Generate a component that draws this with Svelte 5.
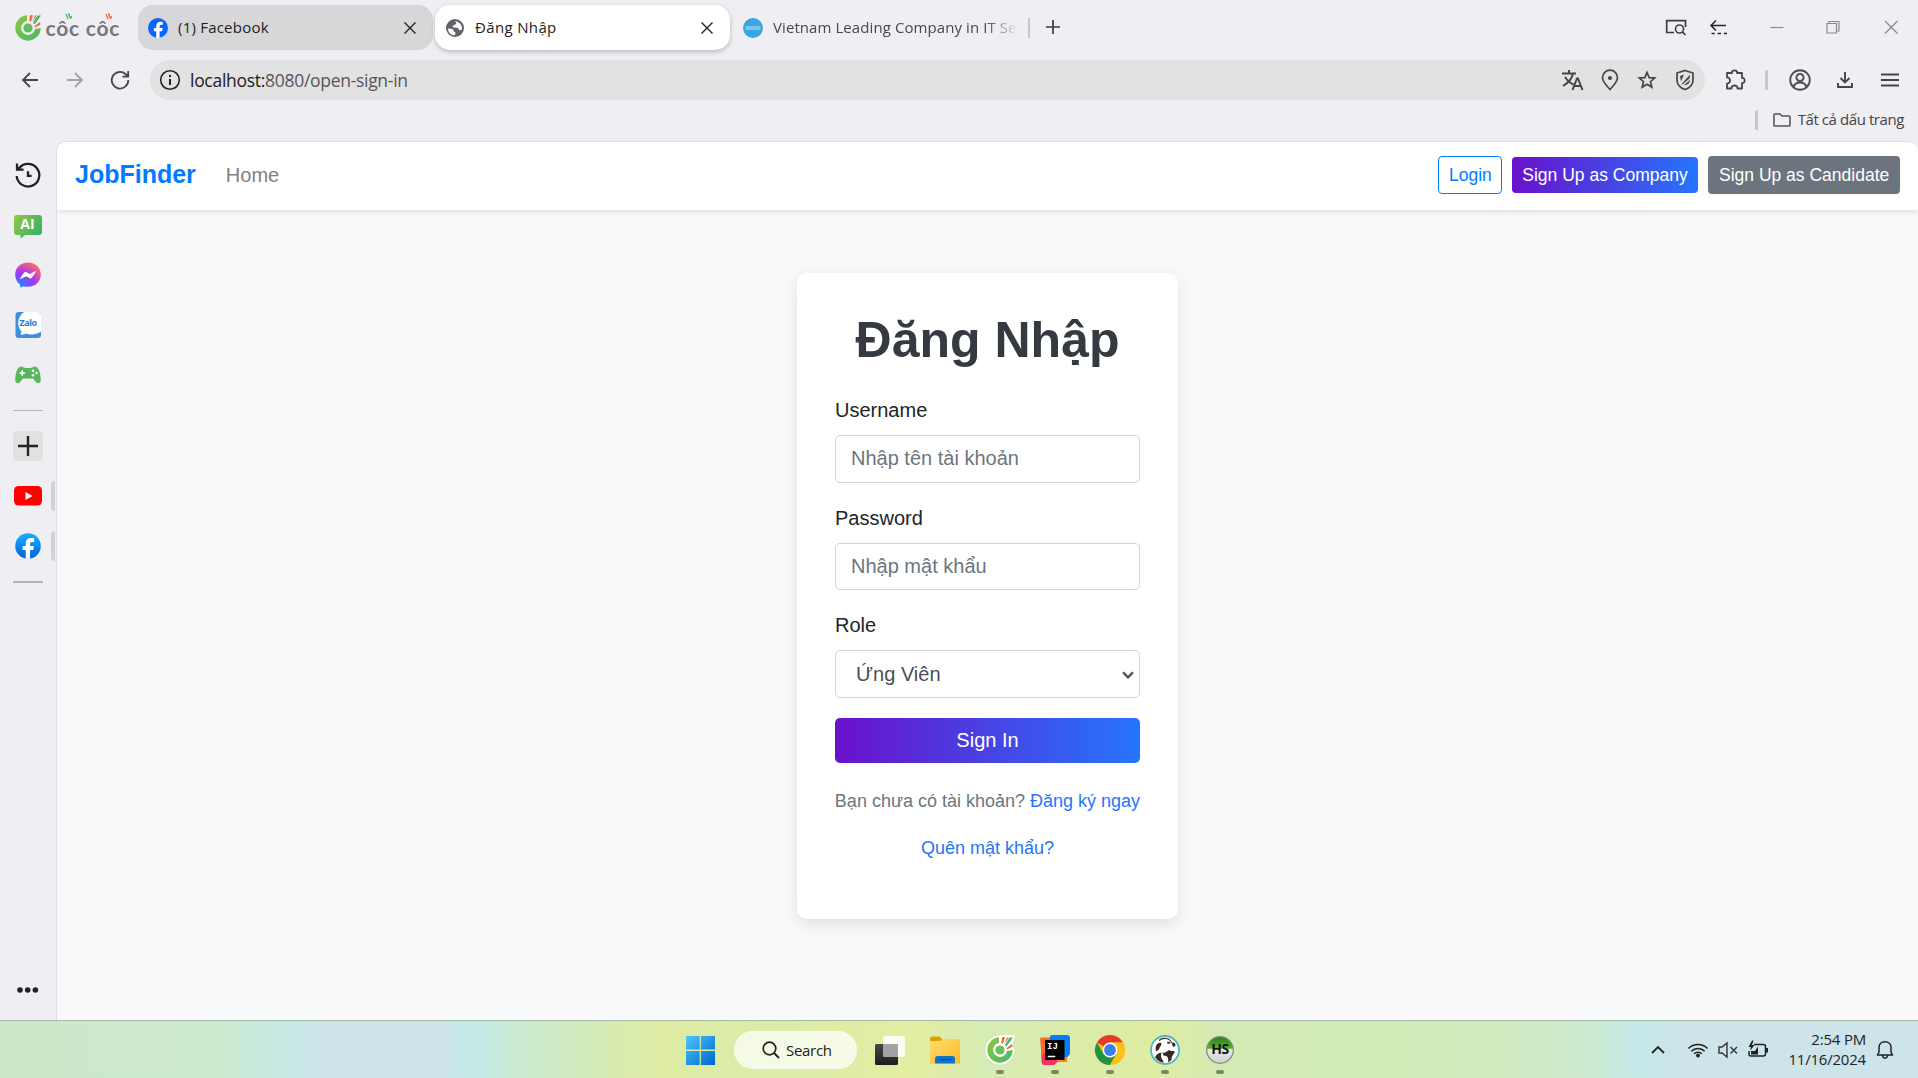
<script>
  let username = $state('');
  let password = $state('');
  const running = ['coccoc', 'idea', 'chrome', 'dbeaver', 'hs'];
</script>

{#snippet fb(id)}
  <svg class="ic" viewBox="-15 -15 30 30">
    <defs>
      <linearGradient id="fbg" x1="0" y1="0" x2="0" y2="1"><stop offset="0" stop-color="#19aeff" /><stop offset="1" stop-color="#0062e0" /></linearGradient>
    </defs>
    <g transform={id === 'side' ? 'scale(1.28)' : ''}>
      <circle r="10" fill={id === 'side' ? 'url(#fbg)' : '#0866ff'} />
      <path d="M-1.800 10V3.200H-4.200V0H-1.800V-1.700C-1.800-4.900 0-6.300 2.600-6.300 3.700-6.300 4.600-6.100 4.800-6V-3.200H3.200C2-3.200 1.600-2.500 1.600-1.500V0H4.600L4.100 3.200H1.600V10Z" fill="#fff" />
    </g>
  </svg>
{/snippet}

{#snippet swirl(outline)}
  <svg class="ic" viewBox="-15 -15 30 30">
    <defs>
      <linearGradient id="ccg" x1="0" y1="0" x2="1" y2="1"><stop offset="0" stop-color="#8cc63f" /><stop offset="1" stop-color="#4bb96a" /></linearGradient>
    </defs>
    {#if outline}<path d="M0-14.500A14.500 14.500 0 1 0 14.500 0L12.500-5 15-15H3Z" fill="#fff" />{/if}
    <path d="M-1-12.700A12.700 12.700 0 1 0 12.700 0L7 1A7 7 0 1 1-1-7Z" fill="url(#ccg)" />
    <circle r="4.600" fill={outline ? '#6cbf55' : '#62bd58'} />
    <path d="M5-5 9.500-12.500H13L6.500-3.500Z" fill="#45b86a" />
    <path d="M1.200-7 2-12.700H5L3-6.600Z M6.500-1.800 12-6 12.500-3.400 7-.4Z M4.200-5.500 7-12.500H8.800Z" fill="#f4623a" />
  </svg>
{/snippet}

{#snippet closeX()}
  <svg class="ic" viewBox="-15 -15 30 30"><path d="M-5.500-5.500 5.500 5.500M5.500-5.500-5.500 5.500" stroke="#222" stroke-width="1.400" fill="none" /></svg>
{/snippet}

<div class="screen">
  <header class="chrome">
    <div class="tabs">
      <div class="logo">
        {@render swirl(false)}
        <span class="brandword">côc côc
          <svg class="accents" viewBox="0 0 74 10"><path d="M20 1 22 6M22.500 0 24 5M25.500 3 24.500 6" stroke="#4bb96a" stroke-width="1.300" /><path d="M60 1 62 6M62.500 0 64 5M65.500 3 64.500 6" stroke="#f4623a" stroke-width="1.300" /></svg>
        </span>
      </div>
      <div class="tab idle">
        {@render fb('tab')}
        <span class="t1">(1) Facebook</span>
        {@render closeX()}
      </div>
      <div class="tab active">
        <svg class="ic" viewBox="-15 -15 30 30">
          <circle r="9" fill="#5f6368" />
          <path d="M-7 .5-2.500 1-1 3.500.5 4.500 0 7.300C-4 7.300-7 4.500-7 .5ZM-1-7C2-6 1.500-5 .5-3.500L-2-2.500-2.500-.8-.5-.5 3 0 4.500 2.500 7 1.500C7.500-3 4-7-1-7Z" fill="#fff" />
        </svg>
        <span class="t2">Đăng Nhập</span>
        {@render closeX()}
      </div>
      <div class="tab plain">
        <svg class="ic" viewBox="-15 -15 30 30"><circle r="10" fill="#3aa6e0" /><path d="M-7.500-1H7.500M-7.500 1H7.500" stroke="#b9e0f5" stroke-width="1.200" /></svg>
        <span class="t3">Vietnam Leading Company in IT Se</span>
      </div>
      <i class="tabsep"></i>
      <svg class="ic newtab" viewBox="-15 -15 30 30"><path d="M-7 0H7M0-7V7" stroke="#3c3c40" stroke-width="1.700" /></svg>
      <div class="winctl">
        <svg class="ic" viewBox="-15 -15 30 30"><path d="M-2 5.500H-9.300V-6.300H9.500V0M6.300 4.800 9.500 8" stroke="#3c3c40" stroke-width="1.700" fill="none" /><circle cx="3.500" cy="2" r="4" stroke="#3c3c40" stroke-width="1.600" fill="none" /></svg>
        <svg class="ic back2" viewBox="-15 -15 30 30"><path d="M8-1.500H-7M-2-6.500-7-1.500-2 3.500" stroke="#222" stroke-width="1.500" fill="none" /><path d="M-6.500 6.500H9" stroke="#222" stroke-width="1.600" stroke-dasharray="3.200 3" /></svg>
        <svg class="ic min" viewBox="-15 -15 30 30"><path d="M-6.500 .5H6.500" stroke="#8a8a8e" stroke-width="1.200" /></svg>
        <svg class="ic max" viewBox="-15 -15 30 30"><path d="M-6-3.500H3.500V6H-6ZM-4-3.500V-5.500H6V4H3.500" stroke="#8a8a8e" stroke-width="1.200" fill="none" /></svg>
        <svg class="ic cls" viewBox="-15 -15 30 30"><path d="M-6-6 6.500 6.500M6.500-6-6 6.500" stroke="#8a8a8e" stroke-width="1.200" /></svg>
      </div>
    </div>

    <div class="toolbar">
      <svg class="ic" viewBox="-15 -15 30 30"><path d="M8 0H-7M0-7-7 0 0 7" stroke="#46464a" stroke-width="1.800" fill="none" /></svg>
      <svg class="ic" viewBox="-15 -15 30 30"><path d="M-8 0H7M0-7 7 0 0 7" stroke="#a3a3a8" stroke-width="1.800" fill="none" /></svg>
      <svg class="ic" viewBox="-15 -15 30 30"><path d="M8.300 0A8.300 8.300 0 1 1 5.500-6L8-3.500M8.200-9V-3.300H2.500" stroke="#46464a" stroke-width="1.800" fill="none" /></svg>
      <div class="omnibox">
        <svg class="ic" viewBox="-15 -15 30 30"><circle r="9.300" stroke="#222" stroke-width="1.600" fill="none" /><path d="M0-1V5M0-5V-3" stroke="#222" stroke-width="2" /></svg>
        <span class="url"><b>localhost:</b>8080/open-sign-in</span>
        <div class="omni-actions">
          <svg class="ic" viewBox="-15 -15 30 30"><path d="M-10-6.500H4M-3-10V-6.500M1-6.500C0-1-4 3-9 6M-7-3C-5 0-2 3 1.500 4.500" stroke="#46464a" stroke-width="2" fill="none" /><path d="M.5 10 5-1.500H6L10.500 10M2 6H9" stroke="#46464a" stroke-width="2" fill="none" /></svg>
          <svg class="ic" viewBox="-15 -15 30 30"><path d="M0 9.500C-4 5-7.500 1.500-7.500-2.300A7.500 7.500 0 0 1 7.500-2.300C7.500 1.500 4 5 0 9.500Z" stroke="#46464a" stroke-width="1.700" fill="none" /><circle cy="-2" r="2" fill="#46464a" /></svg>
          <svg class="ic" viewBox="-15 -15 30 30"><path d="M0-7.500 2.200-2.400 7.700-2 3.500 1.700 4.800 7.100 0 4.200-4.800 7.100-3.500 1.700-7.700-2-2.200-2.400Z" stroke="#46464a" stroke-width="1.700" fill="none" /></svg>
          <svg class="ic" viewBox="-15 -15 30 30"><path d="M0-9.500 8-7V0C8 5 4.500 8 0 9.500-4.500 8-8 5-8 0V-7Z" stroke="#46464a" stroke-width="1.700" fill="none" /><path d="M-5-4-1-5.500-4 1.500ZM-4 4.500 5.200-5.500 4.500-1.500-2 4ZM-1.500 5.500 5.500-.5 3.500 4Z" fill="#46464a" /></svg>
        </div>
      </div>
      <svg class="ic" viewBox="-15 -15 30 30"><path d="M-8-7H-3C-4-10.500 3-10.500 2-7H7V-2C10.500-3 10.500 4 7 3V8.500H2.500C3 4.500-4 4.500-3.500 8.500H-8V3.500C-4 4-4-3-8-2.500Z" stroke="#46464a" stroke-width="1.800" fill="none" stroke-linejoin="round" /></svg>
      <i class="vbar"></i>
      <svg class="ic prof" viewBox="-15 -15 30 30"><circle r="9.800" stroke="#4c4c54" stroke-width="1.900" fill="none" /><circle cy="-2.500" r="3.600" stroke="#4c4c54" stroke-width="1.900" fill="none" /><path d="M-6.500 7.300C-5.500 3-3 2.500 0 2.500S5.500 3 6.500 7.300" stroke="#4c4c54" stroke-width="1.900" fill="none" /></svg>
      <svg class="ic" viewBox="-15 -15 30 30"><path d="M0-8V2.500M-4.500-2 0 2.500 4.500-2M-7 3V7H7V3" stroke="#46464a" stroke-width="1.900" fill="none" /></svg>
      <svg class="ic" viewBox="-15 -15 30 30"><path d="M-9-5.500H9M-9 0H9M-9 5.500H9" stroke="#46464a" stroke-width="1.900" /></svg>
    </div>

    <div class="bookmarks">
      <i class="vbar"></i>
      <svg class="folder" viewBox="0 0 18 14"><path d="M1 2.500V12.200Q1 13 1.800 13H16.200Q17 13 17 12.200V3.800Q17 3 16.200 3H9L7 1H1.800Q1 1 1 1.800Z" stroke="#55555a" stroke-width="1.600" fill="none" /></svg>
      <span>Tất cả dấu trang</span>
    </div>
  </header>

  <div class="middle">
    <aside>
      <svg class="ic s-hist" viewBox="-15 -15 30 30"><path d="M-11.300 1A11.300 11.300 0 1 0-8.500-7.300L-11-5M-11-11.500V-5.300H-4.500M0-3.800V.8H3.600" stroke="#222" stroke-width="2.300" fill="none" /></svg>
      <div class="ai"><svg viewBox="-15 -15 30 30"><defs><linearGradient id="aig" x1="0" y1="0" x2="1" y2=".5"><stop offset="0" stop-color="#93c83d" /><stop offset="1" stop-color="#3fb168" /></linearGradient></defs><path d="M-11-12H11Q14-12 14-9V5Q14 8 11 8H-3L-7 11.500-8 8H-11Q-14 8-14 5V-9Q-14-12-11-12Z" fill="url(#aig)" /></svg><b>AI</b></div>
      <svg class="ic s-mess" viewBox="-15 -15 30 30"><defs><radialGradient id="msg" cx=".15" cy="1" r="1.100"><stop offset="0" stop-color="#0695ff" /><stop offset=".55" stop-color="#a334fa" /><stop offset="1" stop-color="#ff6968" /></radialGradient></defs><path d="M0-12.600C7.500-12.600 12.800-7.500 12.800-.4S7.500 11.800 0 11.800C-2 11.800-3.500 11.500-4.500 11.200L-7.800 12.600-8 9.500C-11 7.500-12.800 4-12.800-.4-12.800-7.500-7.500-12.600 0-12.600Z" fill="url(#msg)" /><path d="M-7.500 3.500-3-3 2-.5 7.500-3.500 3 3.200-2 .8Z" fill="#fff" stroke="#fff" stroke-linejoin="round" /></svg>
      <div class="zalo"><svg viewBox="-15 -15 30 30"><rect x="-12.500" y="-13" width="25.500" height="26" rx="3" fill="#3f8fd9" /><path d="M-4-13C-11-8-11.500 1-6.500 6.500L-7.500 9.500C-5 10-3 9-2 8.500 3 10.500 9 9.500 13 6.500V-10Q13-13 10-13Z" fill="#fff" /></svg><b>Zalo</b></div>
      <svg class="ic s-game" viewBox="-15 -15 30 30"><path d="M-7-8.500C-5-8.500-4-7-2.500-7H2.500C4-7 5-8.500 7-8.500 11-8.500 13 0 12.700 5.500 12.500 9 9 9 7.500 6.500L5 3.500H-5L-7.500 6.500C-9 9-12.500 9-12.700 5.500-13 0-11-8.500-7-8.500Z" fill="#5bb55c" /><path d="M-8.500-2H-3M-5.700-4.700V.7" stroke="#fff" stroke-width="1.700" /><g fill="#fff"><circle cx="5" cy="-4.300" r="1.300" /><circle cx="5" cy=".2" r="1.300" /><circle cx="8.500" cy="-2" r="1.300" /></g></svg>
      <i class="hr h1"></i>
      <div class="plus"><svg viewBox="-15 -15 30 30"><path d="M-10 0H10M0-10V10" stroke="#222" stroke-width="2.400" /></svg></div>
      <div class="open-app yt"><svg class="ic" viewBox="-15 -15 30 30"><rect x="-14" y="-10" width="28" height="19.500" rx="4.500" fill="#f00" /><path d="M-2.500-4 4.500 0-2.500 4Z" fill="#fff" /></svg><i></i></div>
      <div class="open-app">{@render fb('side')}<i></i></div>
      <i class="hr h2"></i>
      <svg class="ic s-more" viewBox="-15 -15 30 30"><g fill="#222"><circle cx="-8" r="2.800" /><circle cx="-.3" r="2.800" /><circle cx="7.400" r="2.800" /></g></svg>
    </aside>

    <main>
      <nav>
        <a class="brand" href="#home">JobFinder</a>
        <a class="home" href="#home">Home</a>
        <div class="nav-actions">
          <button class="sm login">Login</button>
          <button class="sm company">Sign Up as Company</button>
          <button class="sm candidate">Sign Up as Candidate</button>
        </div>
      </nav>
      <form class="card" onsubmit={(e) => e.preventDefault()}>
        <h1>Đăng Nhập</h1>
        <label for="user">Username</label>
        <input id="user" type="text" placeholder="Nhập tên tài khoản" bind:value={username} />
        <label for="pass">Password</label>
        <input id="pass" type="password" placeholder="Nhập mật khẩu" bind:value={password} />
        <label for="role">Role</label>
        <div class="select" id="role"><span>Ứng Viên</span><svg viewBox="0 0 12 8"><path d="M1 1.300 6 6.300 11 1.300" stroke="#495057" stroke-width="2.300" fill="none" /></svg></div>
        <button class="submit">Sign In</button>
        <p>Bạn chưa có tài khoản? <a href="#signup">Đăng ký ngay</a></p>
        <p class="forgot"><a href="#forgot">Quên mật khẩu?</a></p>
      </form>
    </main>
  </div>

  <footer>
    <div class="dock">
      <svg class="ic" viewBox="-15 -15 30 30"><defs><linearGradient id="wing" gradientUnits="userSpaceOnUse" x1="-14" y1="-14" x2="14" y2="14"><stop offset="0" stop-color="#4cc9fb" /><stop offset="1" stop-color="#0067cf" /></linearGradient></defs><path d="M-14-14H-.3V-.5H-14ZM.9-14H15V-.5H.9ZM-14 1H-.3V15H-14ZM.9 1H15V15H.9Z" fill="url(#wing)" /></svg>
      <div class="search"><svg viewBox="0 0 18 18"><circle cx="7.500" cy="7.500" r="6.300" stroke="#222" stroke-width="1.700" fill="none" /><path d="M12 12 17 17" stroke="#222" stroke-width="1.900" /></svg><span>Search</span></div>
      <svg class="ic" viewBox="-15 -15 30 30"><defs><linearGradient id="tv" x1="0" y1="0" x2="0" y2="1"><stop offset="0" stop-color="#484848" /><stop offset="1" stop-color="#1c1c1c" /></linearGradient></defs><rect x="-15" y="-6" width="23" height="21" rx="1.500" fill="url(#tv)" /><rect x="-7" y="-14" width="22" height="21" rx="1.500" fill="#fff" opacity=".86" /><path d="M-7-6H8V7H-7Z" fill="#8e8e8e" opacity=".75" /></svg>
      <svg class="ic" viewBox="-15 -15 30 30"><defs><linearGradient id="fold" x1="0" y1="0" x2="1" y2="1"><stop offset="0" stop-color="#ffdc6b" /><stop offset="1" stop-color="#fbbb2b" /></linearGradient></defs><path d="M-15-12Q-15-13.500-13-13.500H-6L-3-11.500V-6H-15Z" fill="#dea000" /><path d="M-15-9H-5L-2-11H13Q15-11 15-9V13.500H-15Z" fill="url(#fold)" /><path d="M-10 13.500V8.500Q-10 6-7.500 6H7.500Q10 6 10 8.500V13.500Z" fill="#0f75cf" /><path d="M-6.500 9.500H6.500" stroke="#08508f" stroke-width="1.500" /></svg>
      {#each running as app}
        <div class="app">
          {#if app === 'coccoc'}
            {@render swirl(true)}
          {:else if app === 'idea'}
            <svg class="ic" viewBox="-15 -15 30 30"><path d="M-14-7-6 8 5 10-1 15H-11Q-13 15-13.500 12Z" fill="#fc3162" /><path d="M-15-11Q-15-12.500-13.500-12.500H-3V-3L-13.500 5Z" fill="#fc6a2d" /><path d="M-5-13Q-5-15-3-15H13L15-13V4L9 11-5 0Z" fill="#087cfa" /><path d="M2 7H12V12H2Z" fill="#fc801d" /><rect x="-10" y="-10" width="19.500" height="20" fill="#000" /><path d="M-7.300 6.500H.3" stroke="#fff" stroke-width="1.500" /></svg><b class="ij">IJ</b>
          {:else if app === 'chrome'}
            <svg class="ic" viewBox="-15 -15 30 30"><circle r="15" fill="#fbc116" /><path d="M0 0-13-7.500A15 15 0 0 1 13-7.500H0Z" fill="#e33b2e" /><path d="M-13-7.500A15 15 0 0 0 0 15L6.500 3.700-6.500 3.700Z" fill="#229342" /><path d="M0-7.500H13A15 15 0 0 1 0 15L6.500 3.700Z" fill="#fbc116" /><circle r="7.400" fill="#fff" /><circle r="5.900" fill="#3b7ded" /></svg>
          {:else if app === 'dbeaver'}
            <svg class="ic" viewBox="-15 -15 30 30"><circle r="14" fill="#fff" stroke="#4db5c5" stroke-width="1.800" /><path d="M-6-9.500C-2-13 5-12 6.500-7" stroke="#3b2823" stroke-width="1.100" fill="none" /><path d="M-6-7C-3-8-3-5-5-3-6-1-6.500 1-9 1-10-3-9-6-6-7ZM2.500-8.500 5-8 4.500-6 2-6.500ZM6.500-7.500 10-7 10.500-4 8-3ZM-3 2C-1 4 1 2 4 0 6 2 9 0 10 2 8 5 6 7 6.500 10L3 12.500C4 8 2 5-1 6ZM-10 7C-7 3-4 2-3.500 3.500-5 7-3 9-1 12.500-5 12.500-8 10.500-10 7Z" fill="#3b2823" /></svg>
          {:else}
            <svg class="ic" viewBox="-15 -15 30 30"><defs><linearGradient id="hsg" x1="0" y1="0" x2="0" y2="1"><stop offset="0" stop-color="#2f7a1c" /><stop offset=".44" stop-color="#55b82a" /><stop offset=".46" stop-color="#e9ebe8" /><stop offset="1" stop-color="#cfd1ce" /></linearGradient></defs><circle r="13.300" fill="url(#hsg)" stroke="#858b82" stroke-width="1.300" /></svg><b class="hs">HS</b>
          {/if}
          <i></i>
        </div>
      {/each}
    </div>
    <div class="tray">
      <svg class="ic" viewBox="-15 -15 30 30"><path d="M-6 3 0-3 6 3" stroke="#222" stroke-width="1.800" fill="none" /></svg>
      <svg class="ic wifi" viewBox="-15 -15 30 30"><path d="M-9.500-1.500A13.500 13.500 0 0 1 9.500-1.500M-6.700 1.200A9.500 9.500 0 0 1 6.700 1.200M-4 3.800A5.700 5.700 0 0 1 4 3.800" stroke="#222" stroke-width="1.500" fill="none" /><circle cy="5.500" r="1.900" fill="#222" /></svg>
      <svg class="ic" viewBox="-15 -15 30 30"><path d="M-9-3H-6L-1-7V7L-6 3H-9ZM2.500-3 9 3.500M9-3 2.500 3.500" stroke="#333" stroke-width="1.400" fill="none" /></svg>
      <svg class="ic" viewBox="-15 -15 30 30"><path d="M-4-5.500H5.500Q7.500-5.500 7.500-3.500V4Q7.500 6 5.500 6H-7Q-9 6-9 4V1" stroke="#222" stroke-width="1.500" fill="none" /><path d="M8-2H10V2.500H8ZM-7 1H-3L0-3.500V4.500H-7ZM-6-9.500-9.500-3H-7L-8 1-3.500-5H-6L-4.500-9.500Z" fill="#222" /></svg>
      <div class="clock"><span>2:54 PM</span><span class="date">11/16/2024</span></div>
      <svg class="ic" viewBox="-15 -15 30 30"><path d="M-7.500 5H7.500L6 2V-2.500C6-6 3.500-8.300 0-8.300S-6-6-6-2.500V2ZM-2.500 5.500C-2 9 2 9 2.500 5.500" stroke="#222" stroke-width="1.500" fill="none" stroke-linejoin="round" /></svg>
    </div>
  </footer>
</div>

<style>
  :global(body) { margin: 0; overflow: hidden; }
  .screen, .screen * { box-sizing: border-box; }
  .screen { width: 1918px; height: 1078px; display: flex; flex-direction: column; background: #efeef3; font-family: "Open Sans", "Noto Sans", sans-serif; overflow: hidden; }
  .ic { width: 30px; height: 30px; display: block; flex: none; overflow: visible; }
  i { display: block; flex: none; }
  span { white-space: nowrap; }
  a { text-decoration: none; }

  .chrome { height: 141px; flex: none; }
  .tabs { height: 60px; display: flex; align-items: flex-start; padding-top: 5px; }
  .logo { width: 138px; height: 45px; display: flex; align-items: center; padding-left: 12.5px; flex: none; }
  .brandword { position: relative; margin: 1px 0 0 3px; font: 700 21px/24px Lato, sans-serif; color: #77787b; letter-spacing: 0.75px; }
  .accents { position: absolute; left: 0; top: -3px; width: 74px; height: 10px; }
  .tab { width: 295px; height: 45px; border-radius: 15px; display: flex; align-items: center; padding: 0 8px 0 5px; flex: none; font-size: 15px; color: #222; }
  .tab span { flex: 1; margin-left: 5px; padding-bottom: 2px; }
  .idle { background: #d7d7d9; }
  .active { background: #fff; margin-left: 2px; box-shadow: 0 2px 5px rgba(0, 0, 0, 0.22); }
  .tab .t1 { letter-spacing: 0.22px; }
  .tab .t2 { letter-spacing: 0.35px; }
  .plain { width: 289px; padding: 0 0 0 8px; color: #48484c; }
  .tab .t3 { flex: none; width: 246px; letter-spacing: 0.08px; -webkit-mask-image: linear-gradient(90deg, #000 212px, transparent 246px); mask-image: linear-gradient(90deg, #000 212px, transparent 246px); }
  .tabsep { width: 2px; height: 20px; background: #c6c6ca; margin: 13px 0 0 9px; }
  .newtab { margin: 7px 0 0 8px; }
  .winctl { display: flex; margin: 7px 12px 0 auto; }
  .back2 { margin-left: 12px; }
  .min { margin-left: 29px; }
  .max { margin-left: 26px; }
  .cls { margin-left: 28px; }

  .toolbar { height: 40px; display: flex; align-items: center; gap: 15px; padding: 0 13px 0 15px; }
  .omnibox { flex: 1; height: 40px; border-radius: 20px; background: #e2e2e2; display: flex; align-items: center; padding: 0 5px; }
  .url { margin-left: 5px; padding-bottom: 1px; font-size: 17.500px; color: #55565a; letter-spacing: -0.29px; line-height: 30px; }
  .url b { font-weight: 400; color: #1c1c1e; }
  .omni-actions { display: flex; gap: 7.600px; margin-left: auto; }
  .vbar { width: 3px; height: 20px; border-radius: 2px; background: #c6c6ca; }
  .prof { margin-left: 2px; }
  .bookmarks { height: 39px; display: flex; align-items: center; justify-content: flex-end; padding-right: 14px; font-size: 15px; color: #444448; }
  .folder { width: 18px; height: 14px; margin: 1px 7px 0 15px; }
  .bookmarks span { letter-spacing: -0.42px; padding-bottom: 1px; }

  .middle { flex: 1; display: flex; min-height: 0; }
  aside { width: 56px; flex: none; display: flex; flex-direction: column; padding: 19px 0 0 12.500px; }
  .ai, .zalo { position: relative; width: 30px; height: 30px; flex: none; }
  .ai { margin-top: 22px; }
  .ai svg, .zalo svg, .plus svg { width: 30px; height: 30px; display: block; }
  .ai b { position: absolute; left: 0; width: 30px; top: 2px; text-align: center; font: 700 14px/20px "Open Sans", sans-serif; color: #fff; }
  .zalo b { position: absolute; left: 7px; top: 6px; font: 700 9px/14px "Open Sans", sans-serif; color: #1f7fd3; letter-spacing: -0.5px; }
  .s-mess { margin-top: 18px; }
  .zalo { margin-top: 20px; }
  .s-game { margin-top: 20px; }
  .hr { width: 30px; background: #b4b4b8; }
  .h1 { height: 1px; margin-top: 20px; }
  .plus { width: 30px; height: 30px; border-radius: 5px; background: #e1e1e2; margin-top: 20px; }
  .open-app { display: flex; align-items: center; margin-top: 20px; height: 30px; }
  .open-app i { width: 4px; height: 30px; background: #d2d2d4; border-radius: 4px 0 0 4px; margin-left: 8.500px; }
  .h2 { height: 2px; margin-top: 20px; }
  .s-more { margin: auto 0 15px; }

  main { flex: 1; border: 1px solid #dfdfe2; border-width: 1px 0 0 1px; border-radius: 10px 10px 0 0; overflow: hidden; background: #f8f9fb; display: flex; flex-direction: column; align-items: center; font-family: "Liberation Sans", Arial, sans-serif; }
  nav { width: 100%; height: 68px; flex: none; background: #fff; box-shadow: 0 2px 5px rgba(0, 0, 0, 0.1); display: flex; align-items: center; padding: 0 18px 2px 18px; }
  .brand { font-size: 25px; font-weight: 700; color: #007bff; line-height: 30px; padding-bottom: 2px; }
  .home { font-size: 20px; color: #808080; margin: 0 0 0 30px; }
  .nav-actions { display: flex; align-items: center; gap: 10px; margin-left: auto; }
  .sm { font: 17.500px/26px "Liberation Sans", Arial, sans-serif; height: 36px; padding: 0 10px; border: 1px solid transparent; border-radius: 4px; color: #fff; white-space: nowrap; }
  .login { width: 64px; height: 38px; background: #fff; color: #007bff; border-color: #007bff; }
  .company { width: 186px; border: 0; background: linear-gradient(to right, #6a11cb, #2575fc); }
  .candidate { width: 192px; height: 38px; background: #6c757d; }

  .card { width: 381px; height: 646px; margin-top: 63px; flex: none; background: #fff; border-radius: 10px; box-shadow: 0 5px 15px rgba(0, 0, 0, 0.1); padding: 36.500px 38px 0; display: flex; flex-direction: column; }
  h1 { margin: 0 0 25.500px; font-size: 50px; line-height: 60px; text-align: center; color: #343a40; white-space: nowrap; }
  label { font-size: 20px; line-height: 30px; margin-bottom: 10px; color: #212529; }
  input, .select { width: 305px; height: 47.500px; border: 1px solid #ced4da; border-radius: 5px; background: #fff; font: 20px/30px "Liberation Sans", Arial, sans-serif; color: #495057; padding: 0 15px; margin: 0 0 20px; flex: none; outline: none; }
  input::placeholder { color: #6c757d; opacity: 1; }
  .select { display: flex; align-items: center; justify-content: space-between; padding: 0 5.500px 0 20px; }
  .select svg { width: 12px; height: 8px; margin-top: 2px; }
  .submit { height: 45px; flex: none; border: 0; border-radius: 5px; padding: 0; background: linear-gradient(to right, #6a11cb, #2575fc); color: #fff; font: 20px/30px "Liberation Sans", Arial, sans-serif; }
  p { margin: 25px -4px 0; font-size: 18px; line-height: 27px; color: #6c757d; text-align: center; white-space: nowrap; }
  p.forgot { margin-top: 20px; }
  p a { color: #2575fc; }

  footer { height: 58px; flex: none; border-top: 1px solid #a5b8a8; position: relative; display: flex; align-items: center;
    background: linear-gradient(90deg, #cbe8c8 0, #cbe9cf 220px, #c5e8e4 290px, #cde4ea 320px, #cde4ea 440px, #c2e8e8 470px, #c9ead5 510px, #d3ebb8 590px, #deeba4 655px, #dbeca9 780px, #e4eda2 915px, #d6ebb5 985px, #dbeca9 1080px, #dfeda2 1155px, #d4eab5 1220px, #d2ebb4 1380px, #d0e9bf 1500px, #cbe9cf 1590px, #c3e8e8 1640px, #cde4ea 1680px, #cde4ea 100%); }
  .dock { display: flex; align-items: center; padding-left: 685px; gap: 25px; }
  .search { width: 123px; height: 38px; border-radius: 19px; background: rgba(255, 255, 255, 0.72); border: 1px solid rgba(255, 255, 255, 0.4); margin: 0 -7px 0 -6px; display: flex; align-items: center; padding-left: 27px; font-size: 15px; color: #222; }
  .search svg { width: 18px; height: 18px; margin-right: 6px; }
  .search span { letter-spacing: -0.3px; }
  .app { position: relative; width: 30px; height: 30px; }
  .app i { position: absolute; left: 11px; top: 35px; width: 8px; height: 4px; border-radius: 2px; background: #7d8767; }
  .ij { position: absolute; left: 7px; top: 6px; font: 700 9px/12px "Liberation Mono", monospace; color: #fff; }
  .hs { position: absolute; left: 0; width: 30px; top: 5px; text-align: center; font: 700 14px/18px "Open Sans", sans-serif; color: #151515; letter-spacing: -0.5px; }
  .tray { margin-left: auto; padding-right: 18px; display: flex; align-items: center; }
  .wifi { margin-left: 10px; }
  .clock { width: 93px; display: flex; flex-direction: column; align-items: flex-end; font-size: 15px; line-height: 20px; color: #222; margin-right: 4px; padding-bottom: 2px; }
  .clock span { letter-spacing: -0.2px; }
</style>
